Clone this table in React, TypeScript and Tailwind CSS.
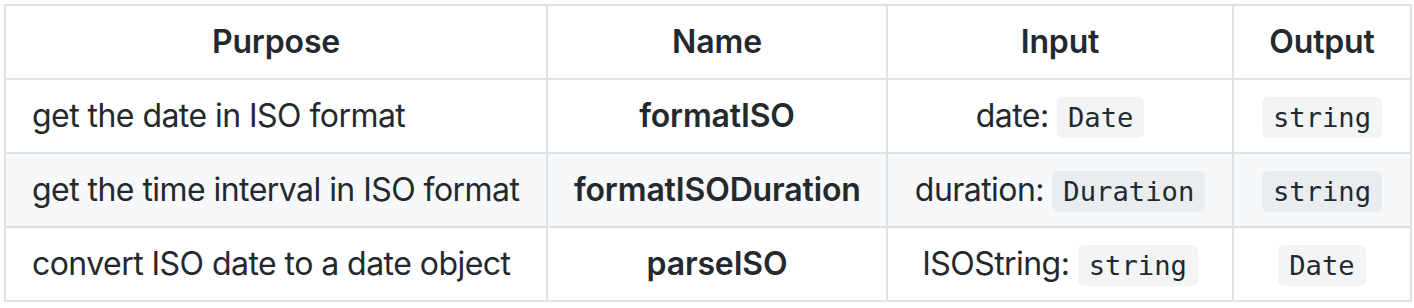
import React from "react";

const sans = "font-['Inter','Noto_Sans',sans-serif]";

function Code({ children }: { children: React.ReactNode }) {
  return (
    <code className="rounded-[6px] bg-[rgba(27,31,35,0.05)] px-[0.4em] py-[0.2em] font-['DejaVu_Sans_Mono','Liberation_Mono',monospace] text-[27.2px] leading-none tracking-normal">
      {children}
    </code>
  );
}

const rows: { purpose: string; name: string; inputLabel: string; inputType: string; output: string }[] = [
  { purpose: "get the date in ISO format", name: "formatISO", inputLabel: "date:", inputType: "Date", output: "string" },
  { purpose: "get the time interval in ISO format", name: "formatISODuration", inputLabel: "duration:", inputType: "Duration", output: "string" },
  { purpose: "convert ISO date to a date object", name: "parseISO", inputLabel: "ISOString:", inputType: "string", output: "Date" },
];

const cell = "whitespace-nowrap border-2 border-[#dfe2e5] px-[26px] py-[12px] h-[72px] align-middle";

export default function App() {
  return (
    <div className={`bg-white p-[4px] text-[#24292e] ${sans}`}>
      <table className="w-[1406px] table-fixed border-collapse text-[32px] leading-[48px]">
        <colgroup>
          <col className="w-[542px]" />
          <col className="w-[340px]" />
          <col className="w-[346px]" />
          <col className="w-[178px]" />
        </colgroup>
        <thead>
          <tr className="bg-white">
            {["Purpose", "Name", "Input", "Output"].map((h) => (
              <th key={h} className={`${cell} text-center font-semibold tracking-[-0.15px]`}>
                {h}
              </th>
            ))}
          </tr>
        </thead>
        <tbody>
          {rows.map((r, i) => (
            <tr key={r.name} className={i % 2 === 1 ? "bg-[#f6f8fa]" : "bg-white"}>
              <td className={`${cell} text-left tracking-[-0.55px]`}>{r.purpose}</td>
              <td className={`${cell} text-center font-semibold tracking-[-0.15px]`}>{r.name}</td>
              <td className={`${cell} text-center tracking-[-0.55px]`}>
                {r.inputLabel} <Code>{r.inputType}</Code>
              </td>
              <td className={`${cell} text-center`}>
                <Code>{r.output}</Code>
              </td>
            </tr>
          ))}
        </tbody>
      </table>
    </div>
  );
}
